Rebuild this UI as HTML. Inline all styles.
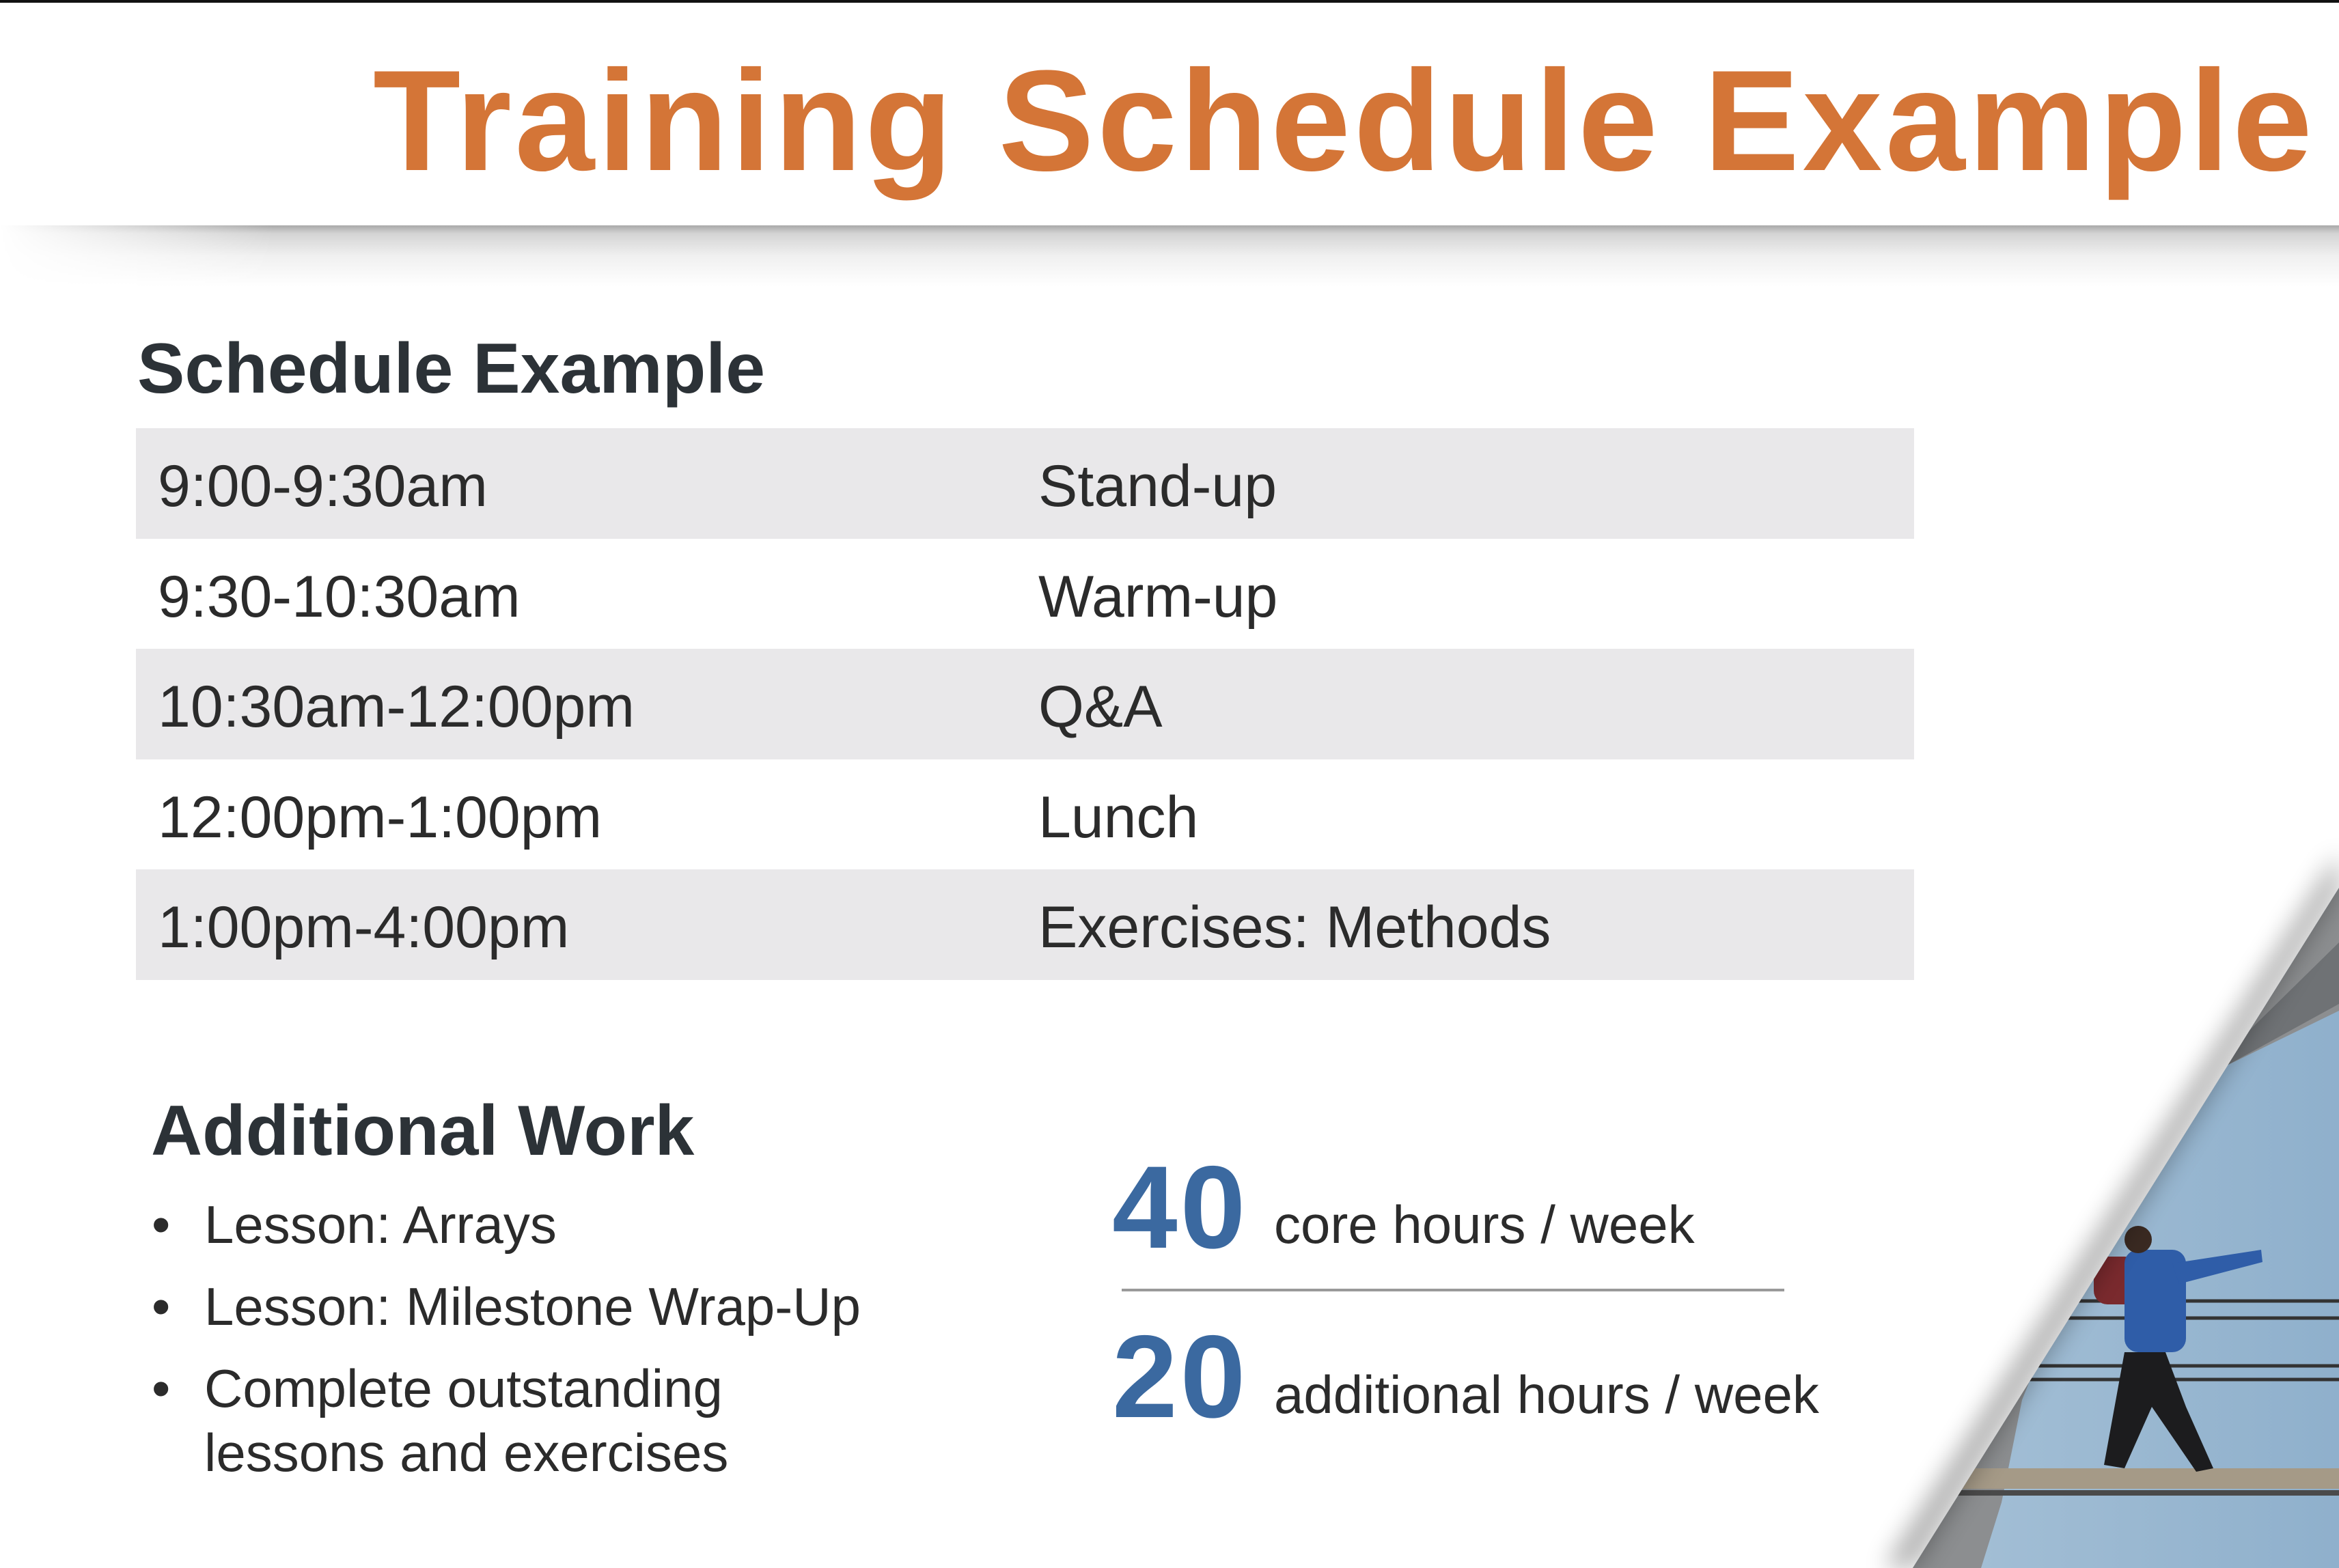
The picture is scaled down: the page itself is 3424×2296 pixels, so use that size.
<!DOCTYPE html>
<html><head><meta charset="utf-8"><style>
html,body{margin:0;padding:0}
body{width:3424px;height:2296px;position:relative;overflow:hidden;background:#fff;font-family:"Liberation Sans",Arial,sans-serif}
.abs{position:absolute;white-space:nowrap}
.topbar{position:absolute;left:0;top:0;width:3424px;height:4px;background:#111}
.shadow{position:absolute;left:0;top:330px;width:3424px;height:90px;background:linear-gradient(#a8a8a8 0,#d4d4d4 12px,#f0f0f0 45px,#fff 90px);-webkit-mask:linear-gradient(90deg,transparent 0,#000 400px);mask:linear-gradient(90deg,transparent 0,#000 400px)}
.title{left:546px;top:72px;font-size:210px;font-weight:bold;color:#d47537;letter-spacing:4.5px;line-height:1}
.h2{font-weight:bold;color:#2c3237}
.row{position:absolute;left:199px;width:2603px;height:162px}
.row.s{background:#e9e8ea}
.row span{position:absolute;top:42px;font-size:86px;color:#2b2b2b;line-height:1}
.b{font-size:78px;color:#2b2b2b;line-height:1}
.num{font-size:172px;font-weight:bold;color:#3b69a0;line-height:1;letter-spacing:4px}
</style></head><body>
<div class="topbar"></div>
<div class="shadow"></div>
<div class="abs title">Training Schedule Example</div>
<div class="abs h2" style="left:201px;top:488px;font-size:104px;line-height:1">Schedule Example</div>
<div class="row s" style="top:627px"><span style="left:32px">9:00-9:30am</span><span style="left:1321px">Stand-up</span></div>
<div class="row" style="top:789px"><span style="left:32px">9:30-10:30am</span><span style="left:1321px">Warm-up</span></div>
<div class="row s" style="top:950px"><span style="left:32px">10:30am-12:00pm</span><span style="left:1321px">Q&amp;A</span></div>
<div class="row" style="top:1112px"><span style="left:32px">12:00pm-1:00pm</span><span style="left:1321px">Lunch</span></div>
<div class="row s" style="top:1273px"><span style="left:32px">1:00pm-4:00pm</span><span style="left:1321px">Exercises: Methods</span></div>

<div class="abs h2" style="left:221px;top:1604px;font-size:104px;line-height:1">Additional Work</div>
<div class="abs b" style="left:222px;top:1754px">•</div><div class="abs b" style="left:299px;top:1754px">Lesson: Arrays</div>
<div class="abs b" style="left:222px;top:1874px">•</div><div class="abs b" style="left:299px;top:1874px">Lesson: Milestone Wrap-Up</div>
<div class="abs b" style="left:222px;top:1994px">•</div><div class="abs b" style="left:299px;top:1994px">Complete outstanding</div>
<div class="abs b" style="left:299px;top:2088px">lessons and exercises</div>

<div class="abs num" style="left:1628px;top:1682px">40</div>
<div class="abs b" style="left:1865px;top:1754px;font-size:78px">core hours / week</div>
<div style="position:absolute;left:1642px;top:1887px;width:970px;height:4px;background:#9a9a9a"></div>
<div class="abs num" style="left:1628px;top:1930px">20</div>
<div class="abs b" style="left:1865px;top:2003px;font-size:78px">additional hours / week</div>

<svg style="position:absolute;left:0;top:0" width="3424" height="2296" viewBox="0 0 3424 2296">
<defs>
<clipPath id="c"><polygon points="3424,1300 3424,2296 2800,2296"/></clipPath>
<linearGradient id="w" x1="0" y1="0" x2="1" y2="0"><stop offset="0" stop-color="#a9c3d8"/><stop offset="1" stop-color="#8fb0cc"/></linearGradient>
<filter id="sh" x="-10%" y="-10%" width="130%" height="130%"><feGaussianBlur stdDeviation="18"/></filter>
</defs>
<g clip-path="url(#c)">
<rect x="2700" y="1280" width="724" height="1016" fill="url(#w)"/>
<polygon points="2700,1280 3424,1280 3424,1480 3260,1560 3150,1650 3080,1790 3020,1900 2960,2050 2930,2200 2900,2296 2700,2296" fill="#8c8e90"/>
<polygon points="3424,1380 3424,1470 3260,1560 3200,1600" fill="#6f7275"/>
<rect x="2700" y="2150" width="724" height="30" fill="#a59a87"/>
<rect x="2700" y="2182" width="724" height="8" fill="#4a4a4a"/>
<line x1="2700" y1="1905" x2="3424" y2="1905" stroke="#333" stroke-width="5"/>
<line x1="2700" y1="1930" x2="3424" y2="1930" stroke="#333" stroke-width="5"/>
<line x1="2700" y1="2000" x2="3424" y2="2000" stroke="#333" stroke-width="5"/>
<line x1="2700" y1="2020" x2="3424" y2="2020" stroke="#333" stroke-width="5"/>
<rect x="3065" y="1840" width="65" height="70" rx="20" fill="#7a2a2e"/>
<rect x="3110" y="1830" width="90" height="150" rx="20" fill="#2f5da8"/>
<polygon points="3180,1850 3310,1830 3312,1848 3190,1880" fill="#2f5da8"/>
<circle cx="3130" cy="1815" r="20" fill="#3a2a22"/>
<polygon points="3110,1980 3170,1980 3200,2060 3240,2150 3215,2155 3150,2060 3110,2150 3080,2145" fill="#1c1c1e"/>
</g>
<polygon points="3424,1300 2800,2296 2760,2296 3424,1250" fill="#000" opacity="0.35" filter="url(#sh)"/>
</svg>
</body></html>
